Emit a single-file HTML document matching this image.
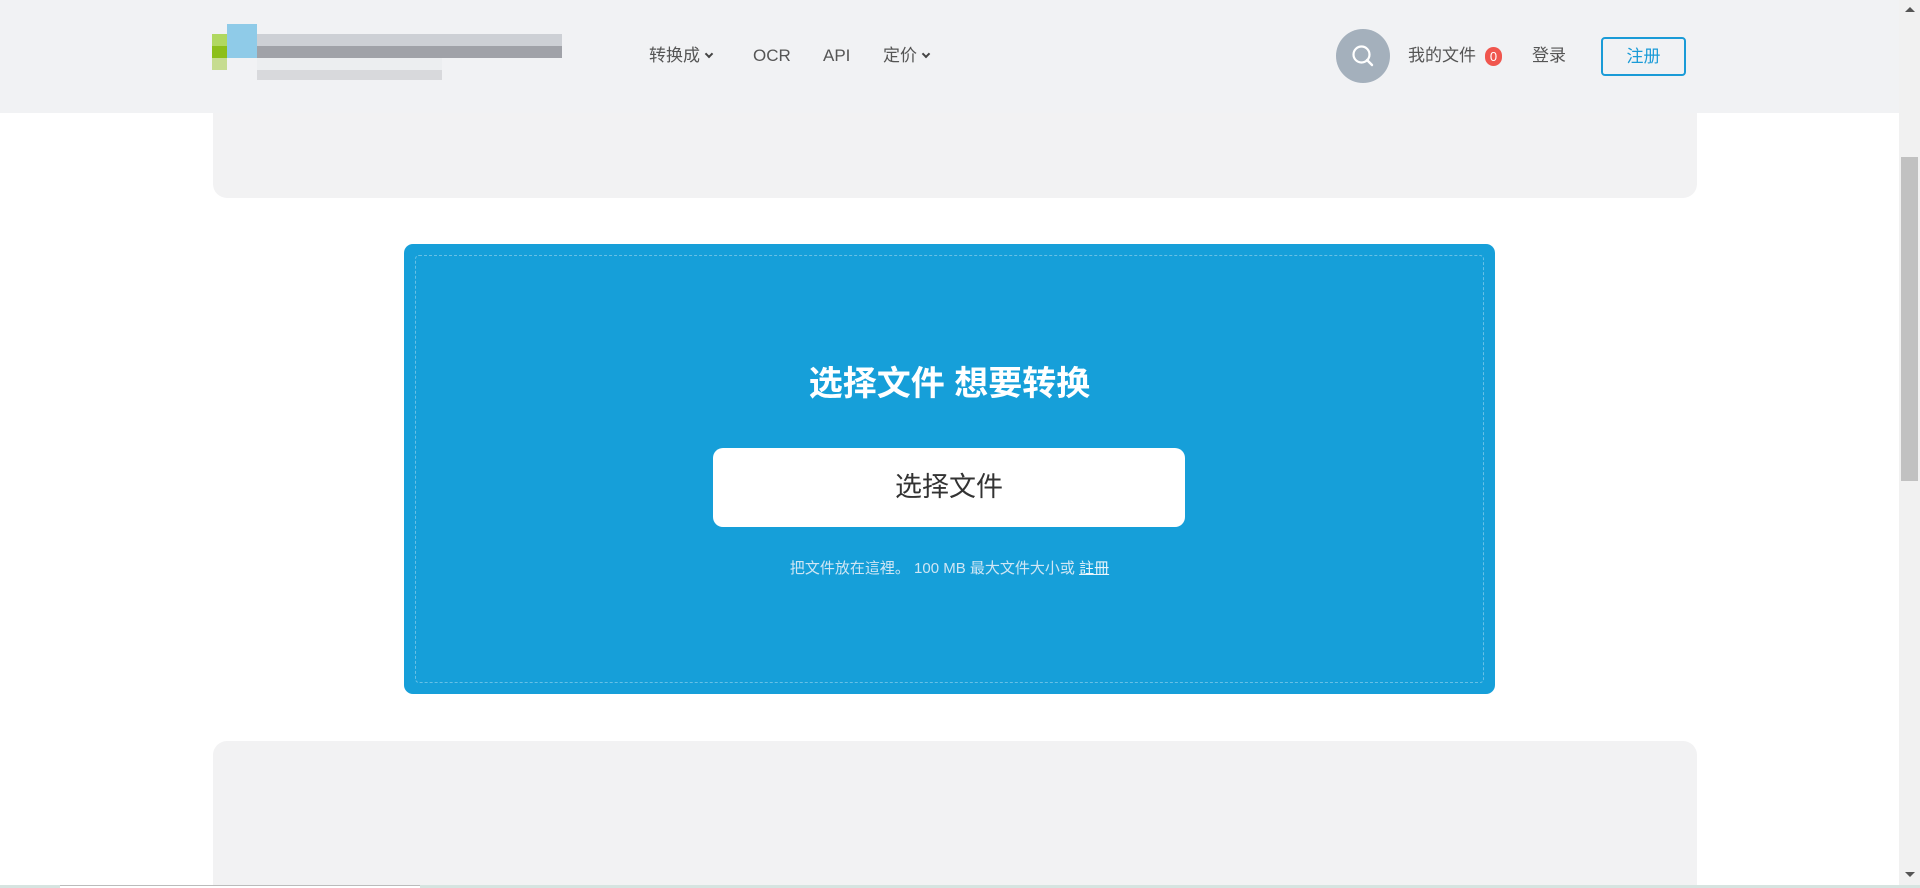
<!DOCTYPE html>
<html style="width:1920px;height:888px;overflow:hidden"><head><meta charset="utf-8"><style>
*{margin:0;padding:0;box-sizing:border-box}
body{width:1920px;height:888px;overflow:hidden;background:#fff;font-family:"Liberation Sans","Noto Sans CJK SC",sans-serif;position:relative}
.hdr{position:absolute;left:0;top:0;width:1899px;height:113px;background:#f1f2f4}
.nav{position:absolute;top:44px;font-size:17px;color:#555;line-height:24px}
.car{display:inline-block;width:6px;height:6px;border-right:2px solid #444;border-bottom:2px solid #444;transform:rotate(45deg);margin-left:6px;position:relative;top:-4px}
.sb{position:absolute;right:0;top:0;width:21px;height:885px;background:#f1f1f1}
.box{position:absolute;background:#f2f2f3;border-radius:14px}
.blue{position:absolute;left:404px;top:244px;width:1091px;height:450px;background:#169fd9;border-radius:9px}
.dash{position:absolute;left:11px;top:11px;right:11px;bottom:11px;border:1px dashed rgba(255,255,255,.35);border-radius:4px}
.lg{position:absolute}
</style></head><body>
<div class="box" style="left:213px;top:90px;width:1484px;height:108px"></div>
<div class="box" style="left:213px;top:741px;width:1484px;height:147px;border-radius:14px 14px 0 0"></div>
<div class="hdr">
 <div class="lg" style="left:212px;top:34px;width:15px;height:12px;background:#b0d860"></div>
 <div class="lg" style="left:212px;top:46px;width:15px;height:12px;background:#8cbf1a"></div>
 <div class="lg" style="left:212px;top:58px;width:15px;height:12px;background:#c6dc90"></div>
 <div class="lg" style="left:227px;top:24px;width:30px;height:34px;background:#8fcbe8"></div>
 <div class="lg" style="left:257px;top:34px;width:305px;height:12px;background:#cdd0d5"></div>
 <div class="lg" style="left:257px;top:46px;width:305px;height:12px;background:#a0a2a8"></div>
 <div class="lg" style="left:257px;top:58px;width:185px;height:12px;background:#eceef0"></div>
 <div class="lg" style="left:257px;top:70px;width:185px;height:10px;background:#d8d9dc"></div>
 <div class="nav" style="left:649px">转换成<span class="car"></span></div>
 <div class="nav" style="left:753px">OCR</div>
 <div class="nav" style="left:823px">API</div>
 <div class="nav" style="left:883px">定价<span class="car"></span></div>
 <div style="position:absolute;left:1336px;top:29px;width:54px;height:54px;border-radius:50%;background:#a4b0bc">
  <svg width="54" height="54" viewBox="0 0 54 54"><circle cx="25.5" cy="25.5" r="8" fill="none" stroke="#fff" stroke-width="2.2"/><path d="M31 31l5 5" stroke="#fff" stroke-width="2.4" stroke-linecap="round"/></svg>
 </div>
 <div class="nav" style="left:1408px">我的文件</div>
 <div style="position:absolute;left:1485px;top:47px;width:17px;height:19px;border-radius:9px;background:#f0564e;color:#fff;font-size:13px;text-align:center;line-height:19px">0</div>
 <div class="nav" style="left:1532px">登录</div>
 <div style="position:absolute;left:1601px;top:37px;width:85px;height:39px;border:2px solid #1a9bd7;border-radius:4px;color:#1a9bd7;font-size:17px;text-align:center;line-height:35px">注册</div>
</div>
<div class="blue"><div class="dash"></div>
 <div style="position:absolute;left:0;width:100%;top:118px;text-align:center;color:#fff;font-size:34px;font-weight:bold;line-height:44px">选择文件 想要转换</div>
 <div style="position:absolute;left:309px;top:204px;width:472px;height:79px;background:#fff;border-radius:10px;text-align:center;line-height:79px;font-size:27px;color:#333">选择文件</div>
 <div style="position:absolute;left:0;width:100%;top:314px;text-align:center;color:#cfe6f4;font-size:15px;line-height:22px">把文件放在這裡。 100 MB 最大文件大小或 <span style="text-decoration:underline;color:#eaf5fb">註冊</span></div>
</div>
<div class="sb">
 <div style="position:absolute;left:2px;top:157px;width:17px;height:324px;background:#c1c1c1"></div>
 <div style="position:absolute;left:6px;top:7px;border:5px solid transparent;border-bottom:5px solid #555;border-top:0"></div>
 <div style="position:absolute;left:6px;top:872px;border:5px solid transparent;border-top:5px solid #555;border-bottom:0"></div>
</div>
<div style="position:absolute;left:0;top:885px;width:1920px;height:3px;background:#d6e4e0"></div>
<div style="position:absolute;left:60px;top:885px;width:360px;height:3px;background:#fff;border-top:1px solid #bbb"></div>
</body></html>
